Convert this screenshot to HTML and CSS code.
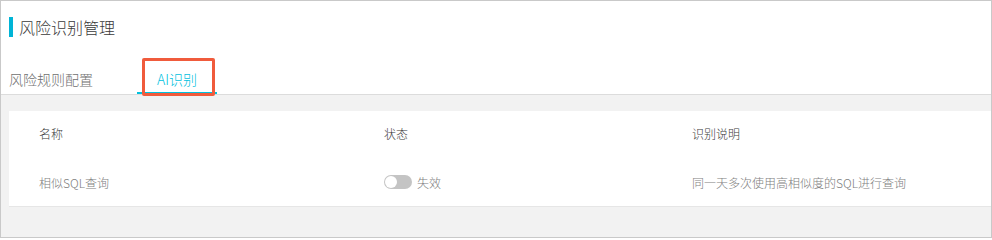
FILE: index.html
```html
<!DOCTYPE html>
<html lang="zh-CN">
<head>
<meta charset="utf-8">
<title>风险识别管理</title>
<link rel="stylesheet" href="styles.css">
</head>
<body>
<div class="frame">
  <div class="header">
    <div class="title"><span class="title-bar"></span><span class="title-text">风险识别管理</span></div>
    <div class="tabs">
      <div class="tab">风险规则配置</div>
      <div class="tab tab-active">AI识别<span class="highlight"></span></div>
    </div>
  </div>
  <div class="card">
    <div class="row row-head">
      <div class="cell">名称</div>
      <div class="cell">状态</div>
      <div class="cell">识别说明</div>
    </div>
    <div class="row row-data">
      <div class="cell">相似SQL查询</div>
      <div class="cell status"><span class="switch"><span class="knob"></span></span><span class="status-text">失效</span></div>
      <div class="cell">同一天多次使用高相似度的SQL进行查询</div>
    </div>
  </div>
</div>
</body>
</html>
```
FILE: styles.css
```css
* { box-sizing: border-box; }
html, body { margin: 0; padding: 0; }
body {
  font-family: "Noto Sans CJK SC", "Liberation Sans", sans-serif;
  font-weight: 300;
  background: #fff;
}
.frame {
  width: 992px;
  height: 238px;
  border: 1px solid #c9c9c9;
  background: #f2f2f2;
  overflow: hidden;
}
.header {
  background: #fff;
  border-bottom: 1px solid #dcdcdc;
  padding: 0 8px;
  height: 94px;
}
.title {
  display: flex;
  align-items: center;
  padding-top: 16px;
  height: 36px;
}
.title-bar {
  width: 4px;
  height: 20px;
  background: #00b4d6;
  margin-right: 6px;
}
.title-text {
  font-size: 16px;
  line-height: 20px;
  color: #3a3a3a;
}
.tabs {
  display: flex;
  margin-top: 22px;
}
.tab {
  position: relative;
  font-size: 14px;
  line-height: 20px;
  color: #707070;
  padding: 10px 20px 3px;
  border-bottom: 2px solid transparent;
}
.tab:first-child {
  padding-left: 0;
  padding-right: 0;
  margin-right: 44px;
}
.tab-active {
  color: #00c1de;
  border-bottom-color: #00c1de;
}
.highlight {
  position: absolute;
  left: 5px;
  top: -1px;
  width: 73px;
  height: 38px;
  border: 3px solid #f05b3c;
  border-radius: 2px;
}
.card {
  margin: 16px 0 0 8px;
  background: #fff;
  height: 96px;
  border-bottom: 1px solid #e6e6e6;
  padding-left: 30px;
}
.row {
  display: grid;
  grid-template-columns: 345px 308px 1fr;
  align-items: center;
  font-size: 12px;
}
.row-head {
  height: 44px;
  color: #3a3a3a;
}
.row-data {
  margin-top: 5px;
  height: 44px;
  color: #808080;
}
.status {
  display: flex;
  align-items: center;
}
.switch {
  position: relative;
  width: 28px;
  height: 14px;
  border-radius: 7px;
  background: #c4c4c4;
  margin-right: 5px;
}
.knob {
  position: absolute;
  left: 1px;
  top: 1px;
  width: 12px;
  height: 12px;
  border-radius: 50%;
  background: #fff;
}
.status-text { color: #808080; }
```
